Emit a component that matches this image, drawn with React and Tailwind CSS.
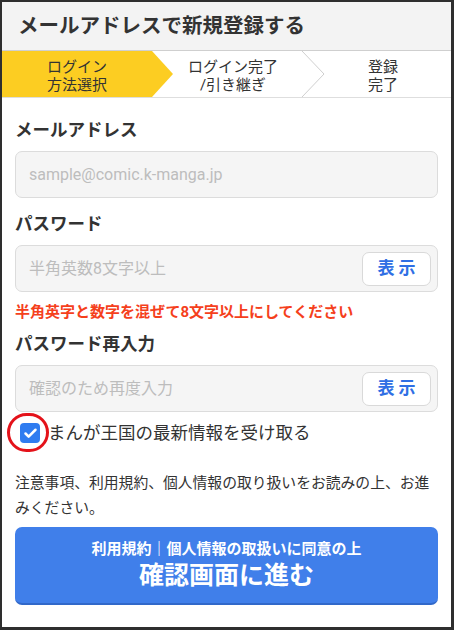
import { Check } from "lucide-react";

const font = { fontFamily: "Roboto, 'Noto Sans CJK JP', sans-serif" };

function Field({ placeholder, withToggle }) {
  return (
    <div className="mt-[9px] h-[47px] rounded-[7px] border border-[#dcdcdc] bg-[#f5f5f5] flex items-center pl-[13px] pr-[6px]">
      <div className="flex-1 text-[16px] text-[#bdbdbd]">{placeholder}</div>
      {withToggle && (
        <button className="w-[69px] h-[34px] rounded-[7px] border border-[#d9d9d9] bg-white text-[17px] font-bold text-[#2f6fe4] tracking-[4px] pl-[4px]">
          表示
        </button>
      )}
    </div>
  );
}

export default function App() {
  return (
    <div
      className="w-[454px] h-[630px] bg-white border-t-2 border-l-2 border-r-[3px] border-b-[3px] border-[#2e2e2e] text-[#333]"
      style={font}
    >
      {/* Header */}
      <div className="h-[49px] bg-[#f3f3f3] border-b border-[#cfcfcf] flex items-center pl-[16px]">
        <h1 className="text-[20.5px] font-bold text-[#333]">メールアドレスで新規登録する</h1>
      </div>

      {/* Steps */}
      <div className="relative h-[47px] border-b border-[#dedede]">
        <svg className="absolute inset-0" width="449" height="46" viewBox="0 0 449 46">
          <polygon points="0,0 150,0 171,23 150,46 0,46" fill="#fccd22" />
          <polyline points="300,0 322,23 300,46" fill="none" stroke="#cfcfcf" strokeWidth="1" />
        </svg>
        <div className="relative flex h-full items-center pt-[3px] text-[15px] leading-[18px] text-[#333] text-center">
          <div className="w-[150px]">ログイン<br />方法選択</div>
          <div className="w-[142px] ml-[10px]">ログイン完了<br />/引き継ぎ</div>
          <div className="w-[118px] ml-[20px]">登録<br />完了</div>
        </div>
      </div>

      <div className="px-[13px]">
        <div className="mt-[20px] text-[17.5px] font-bold leading-[24px]">メールアドレス</div>
        <Field placeholder="sample@comic.k-manga.jp" />

        <div className="mt-[14px] text-[17.5px] font-bold leading-[24px]">パスワード</div>
        <Field placeholder="半角英数8文字以上" withToggle />
        <div className="mt-[9px] text-[15px] font-bold text-[#f5401c] leading-[22px]">
          半角英字と数字を混ぜて8文字以上にしてください
        </div>

        <div className="mt-[9px] text-[17.5px] font-bold leading-[24px]">パスワード再入力</div>
        <Field placeholder="確認のため再度入力" withToggle />

        <div className="mt-[5px] flex items-center gap-[8px] h-[32px]">
          <div className="relative ml-[5px] w-[20px] h-[20px] rounded-[4px] bg-[#2f7cf0] flex items-center justify-center">
            <Check size={15} strokeWidth={4} color="white" />
            <div className="absolute -left-[13px] -top-[10px] w-[42px] h-[39px] rounded-full border-[3.5px] border-[#e4121a]" />
          </div>
          <span className="text-[17.5px]">まんが王国の最新情報を受け取る</span>
        </div>

        <p className="mt-[22px] text-[14.8px] leading-[25px]">
          注意事項、利用規約、個人情報の取り扱いをお読みの上、お進みください。
        </p>

        <button className="mt-[6px] w-full h-[78px] rounded-[7px] bg-[#407fea] border-b-2 border-[#3168c9] text-white flex flex-col items-center justify-center">
          <span className="text-[15px] font-bold leading-[22px]">利用規約｜個人情報の取扱いに同意の上</span>
          <span className="text-[25px] font-bold leading-[32px]">確認画面に進む</span>
        </button>
      </div>
    </div>
  );
}
